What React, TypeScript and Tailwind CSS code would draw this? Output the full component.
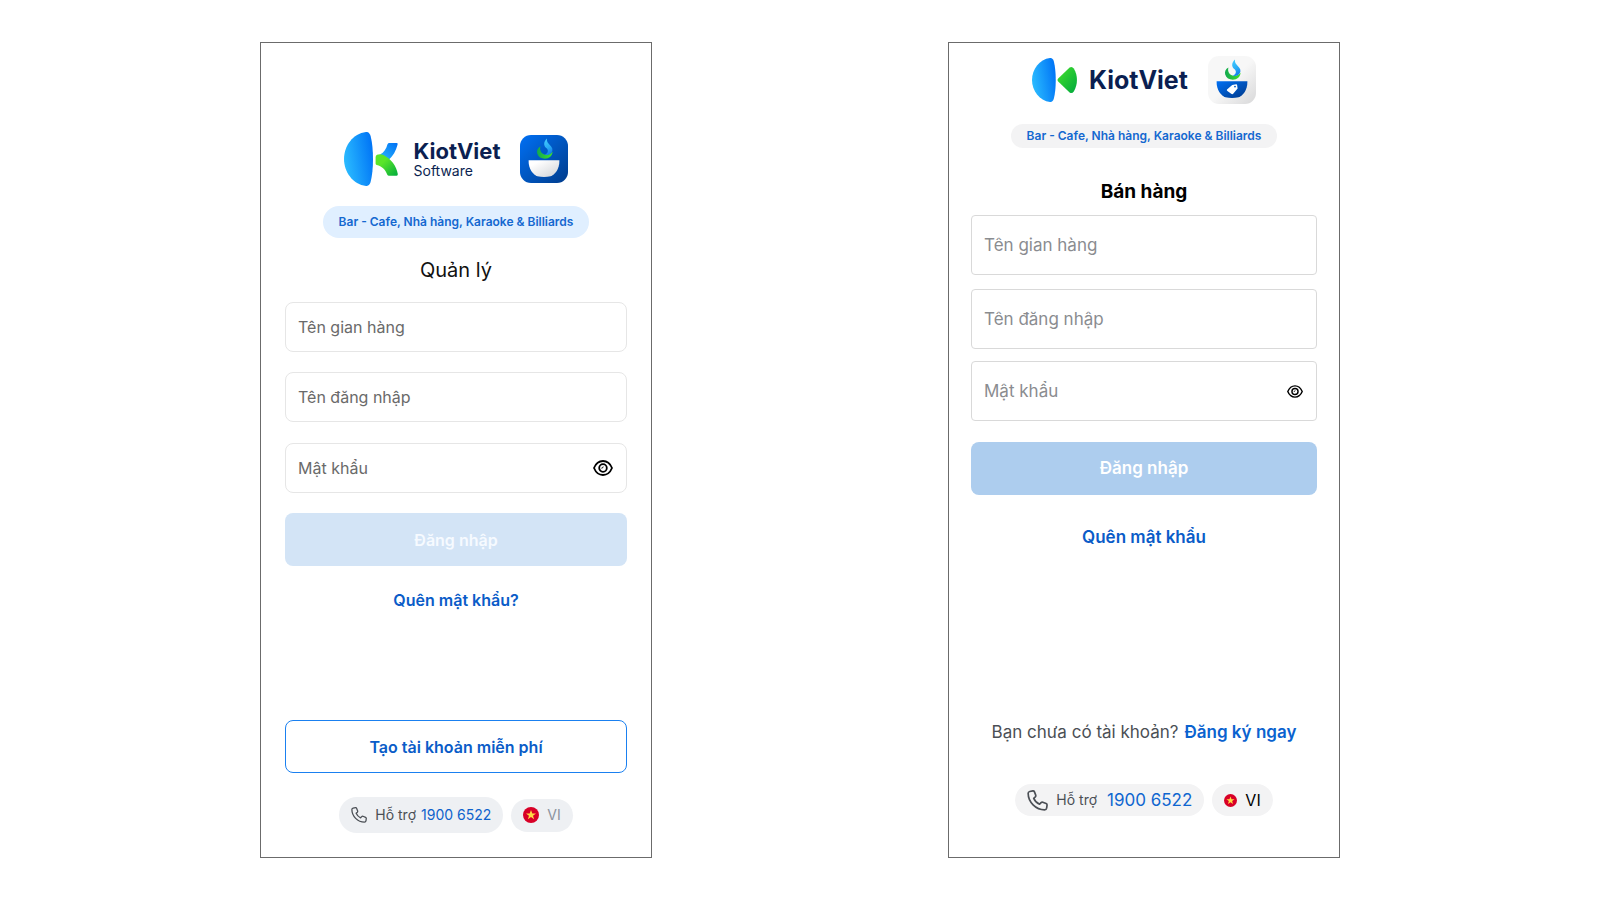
import type { ReactNode } from "react";

function Flame({ id }: { id: string }) {
  return (
    <g>
      <defs>
        <linearGradient id={`${id}-green`} x1="0" y1="0" x2="1" y2="0">
          <stop offset="0" stopColor="#12a850" />
          <stop offset="1" stopColor="#3fe02c" />
        </linearGradient>
        <linearGradient id={`${id}-cyan`} x1="0" y1="0" x2="0.3" y2="1">
          <stop offset="0" stopColor="#45ccff" />
          <stop offset="0.6" stopColor="#2aaef5" />
          <stop offset="1" stopColor="#1583ee" />
        </linearGradient>
      </defs>
      <path
        d="M20.4 11.6C17.6 13 16.4 15.8 17.2 18.6C18.2 22 21.2 23.8 24.8 23.8C29.2 23.8 32.4 21 32.6 16.6C31 18.8 28.6 19.9 25.8 19.8C22 19.6 19.2 16.2 20.4 11.6Z"
        fill={`url(#${id}-green)`}
      />
      <path
        d="M27 3.6C26.6 7 28 8.2 29.8 10C32.6 12.8 33.2 15 31.6 17.6C30 19.8 27.4 20.6 24.6 19.6C26.8 19 28.2 17.2 27.8 15.2C27.4 13.2 24.6 12.8 24.2 9.6C24 7.2 25.2 5.2 27 3.6Z"
        fill={`url(#${id}-cyan)`}
      />
    </g>
  );
}

function ManagerAppIcon() {
  return (
    <svg className="size-12 shrink-0" viewBox="0 0 48 48" aria-hidden="true">
      <defs>
        <linearGradient id="manager-bg" x1="0" y1="0" x2="1" y2="1">
          <stop offset="0" stopColor="#0070f4" />
          <stop offset="1" stopColor="#003c8c" />
        </linearGradient>
        <linearGradient id="manager-bowl" x1="0" y1="0" x2="1" y2="1">
          <stop offset="0.2" stopColor="#ffffff" />
          <stop offset="1" stopColor="#cfd2d6" />
        </linearGradient>
      </defs>
      <rect width="48" height="48" rx="11" fill="url(#manager-bg)" />
      <path d="M8.6 25.2H39.4C39.6 34 35 39.6 30.6 41.2Q24 42.6 17.4 41.2C13 39.6 8.4 34 8.6 25.2Z" fill="url(#manager-bowl)" />
      <Flame id="manager" />
    </svg>
  );
}

function SalesAppIcon() {
  return (
    <svg className="size-12 shrink-0" viewBox="0 0 48 48" aria-hidden="true">
      <defs>
        <linearGradient id="sales-bg" x1="0" y1="0" x2="1" y2="1">
          <stop offset="0.5" stopColor="#f7f7f7" />
          <stop offset="1" stopColor="#d8d8d9" />
        </linearGradient>
        <linearGradient id="sales-bowl" x1="0" y1="0" x2="1" y2="1">
          <stop offset="0" stopColor="#0070f4" />
          <stop offset="1" stopColor="#00398a" />
        </linearGradient>
      </defs>
      <rect width="48" height="48" rx="11" fill="url(#sales-bg)" />
      <path d="M8.6 25.2H39.4C39.6 34 35 39.6 30.6 41.2Q24 42.6 17.4 41.2C13 39.6 8.4 34 8.6 25.2Z" fill="url(#sales-bowl)" />
      <path d="M19 33.4L24.2 28.9L28.2 28.2Q29 28.2 29.1 29L29.6 32.4L25.4 37.6Q24.4 38.6 23.2 37.8L19.4 35Q18.4 34.2 19 33.4Z" fill="#fff" />
      <circle cx="27" cy="30.6" r="0.9" fill="#0054bd" />
      <Flame id="sales" />
    </svg>
  );
}

function SoftwareMark() {
  return (
    <svg className="h-[54px] w-[54px] shrink-0" viewBox="0 0 54 54" aria-hidden="true">
      <defs>
        <linearGradient id="sw-blue" x1="0" y1="0.6" x2="1" y2="0.3">
          <stop offset="0" stopColor="#2bbcff" />
          <stop offset="1" stopColor="#0074f6" />
        </linearGradient>
        <linearGradient id="sw-green" x1="0" y1="0" x2="1" y2="1">
          <stop offset="0.35" stopColor="#5ae52a" />
          <stop offset="1" stopColor="#00ab3d" />
        </linearGradient>
        <linearGradient id="sw-arm" x1="1" y1="0" x2="0" y2="1">
          <stop offset="0" stopColor="#0070f4" />
          <stop offset="1" stopColor="#2bb8ff" />
        </linearGradient>
      </defs>
      <path d="M22 0C9 1.4 0 14 0 27S9 52.6 22 54C24.4 54.2 25.8 52.6 26.6 50C29.8 38 29.8 16 26.6 4C25.8 1.4 24.4-.2 22 0Z" fill="url(#sw-blue)" />
      <path d="M36 22.6C40 20.4 42.4 16.6 43.4 12.4Q44 11 45.4 11H52.6Q54 11 53.6 12.4C52 18.6 49 24 44.6 28Z" fill="url(#sw-arm)" />
      <path d="M31.6 31.4V25.2Q31.6 23.6 33 22.8C35 21.8 37.4 22 39.4 23C47.4 27 52.4 34 53.8 42Q54 43.8 52.6 43.8H45Q43.8 43.8 43.2 42.4C41.4 37.6 37.6 34 32.8 33Q31.6 32.8 31.6 31.4Z" fill="url(#sw-green)" />
    </svg>
  );
}

function ClassicMark() {
  return (
    <svg className="h-11 w-[45px] shrink-0" viewBox="0 0 45 44" aria-hidden="true">
      <defs>
        <linearGradient id="cl-blue" x1="0" y1="0.6" x2="1" y2="0.3">
          <stop offset="0" stopColor="#2bbcff" />
          <stop offset="1" stopColor="#0074f6" />
        </linearGradient>
        <linearGradient id="cl-green" x1="0" y1="0" x2="1" y2="1">
          <stop offset="0.2" stopColor="#37d62e" />
          <stop offset="1" stopColor="#00a83e" />
        </linearGradient>
      </defs>
      <path d="M18 0C7.4 1.2 0 11.4 0 22S7.4 42.8 18 44C20 44.1 21.2 43 21.8 40.8C24.4 31 24.4 13 21.8 3.2C21.2 1 20-.1 18 0Z" fill="url(#cl-blue)" />
      <path d="M26.2 20.6L37.6 9.6Q40 7.8 41.8 10.6C46 17.6 46 26.4 41.8 33.4Q40 36.2 37.6 34.4L26.2 23.4Q24.8 22 26.2 20.6Z" fill="url(#cl-green)" />
    </svg>
  );
}

function EyeIcon({ className }: { className: string }) {
  return (
    <svg className={className} viewBox="0 0 20 16" fill="none" stroke="currentColor" aria-hidden="true">
      <path d="M1 8C2.8 3.6 6 1 10 1S17.2 3.6 19 8C17.2 12.4 14 15 10 15S2.8 12.4 1 8Z" strokeWidth="1.8" />
      <circle cx="10" cy="8" r="3.8" strokeWidth="1.8" />
      <path d="M10.2 6.6A1.8 1.8 0 0 1 8.4 8.2" strokeWidth="1" />
    </svg>
  );
}

function PhoneIcon({ className }: { className: string }) {
  return (
    <svg className={className} viewBox="0 0 20 20" fill="none" stroke="currentColor" strokeWidth="1.6" strokeLinejoin="round" aria-hidden="true">
      <path d="M2.6 1.4L5.6 .9Q6.7 .8 7.1 1.8L8.3 4.9Q8.6 5.8 7.9 6.5L6.4 7.9C7.4 10.2 9.4 12.4 12 13.5L13.4 12Q14.1 11.3 15 11.6L18.2 12.9Q19.2 13.3 19.1 14.4L18.7 17.3Q18.4 18.9 16.8 18.9C8.4 18.9 1.1 11.6 1.1 3.2Q1.1 1.7 2.6 1.4Z" />
    </svg>
  );
}

function VietnamFlag({ className }: { className: string }) {
  return (
    <svg className={className} viewBox="0 0 16 16" aria-hidden="true">
      <circle cx="8" cy="8" r="8" fill="#d80027" />
      <path d="M8 3L9.3 6.5H13L10 8.7L11.1 12.3L8 10.1L4.9 12.3L6 8.7L3 6.5H6.7Z" fill="#ffda44" />
    </svg>
  );
}

function Screen({ label, className, children }: { label: string; className: string; children: ReactNode }) {
  return (
    <section aria-label={label} className={`flex w-full max-w-[392px] flex-col items-center border border-[#6b6b6b] bg-white ${className}`}>
      {children}
    </section>
  );
}

function ManagerLogin() {
  const field = "h-[50px] w-full rounded-lg border border-[#e6e6e6] px-3 text-base text-[#333] placeholder:text-[#6a6a6a] outline-none";
  return (
    <Screen label="Quản lý" className="px-6">
      <div className="mt-[89px] flex items-center">
        <SoftwareMark />
        <div className="ml-4 flex flex-col text-[#0b1f51]">
          <span className="text-[22px] leading-6 font-bold">KiotViet</span>
          <span className="text-sm leading-4">Software</span>
        </div>
        <div className="ml-5">
          <ManagerAppIcon />
        </div>
      </div>
      <p className="mt-5 rounded-full bg-[#e0efff] px-4 text-xs leading-8 font-semibold text-[#1468d0]">
        Bar - Cafe, Nhà hàng, Karaoke &amp; Billiards
      </p>
      <h1 className="mt-4 text-xl leading-8 text-[#111]">Quản lý</h1>
      <form className="mt-4 flex w-full flex-col" onSubmit={(e) => e.preventDefault()}>
        <input className={field} aria-label="Tên gian hàng" placeholder="Tên gian hàng" />
        <input className={`mt-5 ${field}`} aria-label="Tên đăng nhập" placeholder="Tên đăng nhập" />
        <div className="relative mt-[21px]">
          <input className={field} type="password" aria-label="Mật khẩu" placeholder="Mật khẩu" />
          <button type="button" aria-label="Hiện mật khẩu" className="absolute inset-y-0 right-3.5 flex items-center text-black">
            <EyeIcon className="h-4 w-5" />
          </button>
        </div>
        <button type="submit" className="mt-5 h-[53px] rounded-lg bg-[#d3e4f6] text-base font-semibold text-[#f6faff]">
          Đăng nhập
        </button>
      </form>
      <a href="#forgot" className="mt-[22px] text-base leading-6 font-semibold text-[#0a5cc8]">
        Quên mật khẩu?
      </a>
      <button type="button" className="mt-auto h-[53px] w-full rounded-lg border border-[#1a80f0] text-base font-semibold text-[#0a5cc8]">
        Tạo tài khoản miễn phí
      </button>
      <div className="mt-6 mb-6 flex items-center gap-2">
        <p className="flex h-9 items-center rounded-full bg-[#eef0f3] px-3 text-sm text-[#4b4f55]">
          <PhoneIcon className="mr-2 size-4" />
          Hỗ trợ
          <a href="tel:19006522" className="ml-[5px] text-[#0f62cc]">1900 6522</a>
        </p>
        <button type="button" className="flex h-[33px] items-center gap-2 rounded-full bg-[#eef0f3] px-3 text-sm text-[#8b939e]">
          <VietnamFlag className="size-4" />
          VI
        </button>
      </div>
    </Screen>
  );
}

function SalesLogin() {
  const field = "h-[60px] w-full rounded border border-[#d9d9d9] px-3 text-[17px] text-[#333] placeholder:text-[#8a8c90] outline-none";
  return (
    <Screen label="Bán hàng" className="px-[22px]">
      <div className="mt-[13px] flex items-center">
        <ClassicMark />
        <span className="ml-3 text-[25px] leading-8 font-bold text-[#0b1f51]">KiotViet</span>
        <div className="ml-5">
          <SalesAppIcon />
        </div>
      </div>
      <p className="mt-5 rounded-full bg-[#f3f3f4] px-4 text-xs leading-6 font-semibold text-[#1468d0]">
        Bar - Cafe, Nhà hàng, Karaoke &amp; Billiards
      </p>
      <h1 className="mt-7 text-[19px] leading-8 font-bold text-black">Bán hàng</h1>
      <form className="mt-[7px] flex w-full flex-col" onSubmit={(e) => e.preventDefault()}>
        <input className={field} aria-label="Tên gian hàng" placeholder="Tên gian hàng" />
        <input className={`mt-3.5 ${field}`} aria-label="Tên đăng nhập" placeholder="Tên đăng nhập" />
        <div className="relative mt-3">
          <input className={field} type="password" aria-label="Mật khẩu" placeholder="Mật khẩu" />
          <button type="button" aria-label="Hiện mật khẩu" className="absolute inset-y-0 right-3.5 flex items-center text-black">
            <EyeIcon className="h-[13px] w-4" />
          </button>
        </div>
        <button type="submit" className="mt-[21px] h-[53px] rounded-lg bg-[#adcdee] text-[17px] font-semibold text-white">
          Đăng nhập
        </button>
      </form>
      <a href="#forgot" className="mt-[30px] text-[17px] leading-6 font-semibold text-[#0a5cc8]">
        Quên mật khẩu
      </a>
      <p className="mt-auto flex gap-1.5 text-[17px] leading-6 text-[#4b4f55]">
        Bạn chưa có tài khoản?
        <a href="#register" className="font-semibold text-[#0a62cf]">Đăng ký ngay</a>
      </p>
      <div className="mt-10 mb-[41px] flex items-center gap-2">
        <p className="flex h-8 items-center rounded-full bg-[#f3f3f4] px-3 text-sm text-[#4b4f55]">
          <PhoneIcon className="mr-2 size-[21px]" />
          Hỗ trợ
          <a href="tel:19006522" className="ml-2.5 text-[17px] text-[#0f66d0]">1900 6522</a>
        </p>
        <button type="button" className="flex h-8 items-center gap-2 rounded-full bg-[#f3f3f4] px-3 text-base text-black">
          <VietnamFlag className="size-[13px]" />
          VI
        </button>
      </div>
    </Screen>
  );
}

export default function App() {
  return (
    <main className="flex min-h-screen justify-center gap-[296px] bg-white py-[42px] font-[Inter,sans-serif]">
      <ManagerLogin />
      <SalesLogin />
    </main>
  );
}
